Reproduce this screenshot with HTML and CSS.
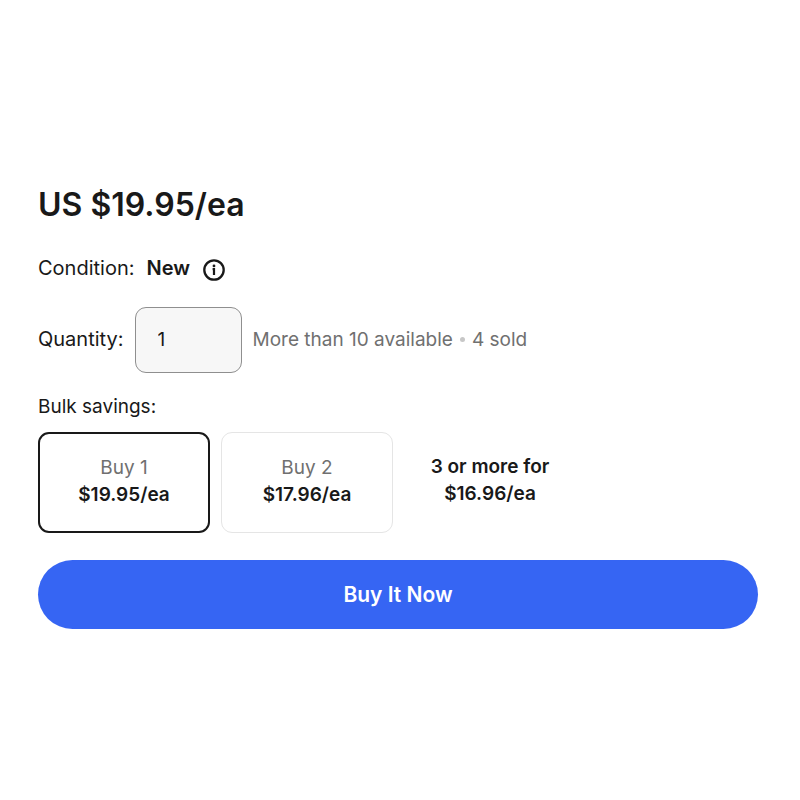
FILE: index.html
```html
<!DOCTYPE html>
<html lang="en">
<head>
  <meta charset="UTF-8">
  <meta name="viewport" content="width=device-width, initial-scale=1.0">
  <title>Buy It Now</title>
  <link rel="stylesheet" href="styles.css">
</head>
<body>

<form class="buy-box">
  <h1 class="price">US $19.95/ea</h1>

  <div class="condition">
    <span>Condition:</span>
    <strong>New</strong>
    <button type="button" class="info-button" aria-label="About this condition">
      <svg viewBox="0 0 24 24" width="24" height="24" fill="none" stroke="#191919">
        <circle cx="12" cy="12" r="9.7" stroke-width="2.3"/>
        <path d="M10.6 11.2H12V17" stroke-width="2.2"/>
        <circle cx="12" cy="7.9" r="1.4" fill="#191919" stroke="none"/>
      </svg>
    </button>
  </div>

  <div class="quantity">
    <label for="quantity">Quantity:</label>
    <input type="text" id="quantity" name="quantity" value="1" inputmode="numeric">
    <p class="stock">More than 10 available <span class="dot"></span> 4 sold</p>
  </div>

  <p class="bulk-title">Bulk savings:</p>
  <div class="bulk-options">
    <button type="button" class="bulk-option selected" aria-pressed="true">
      <span class="bulk-label">Buy 1</span>
      <strong>$19.95/ea</strong>
    </button>
    <button type="button" class="bulk-option" aria-pressed="false">
      <span class="bulk-label">Buy 2</span>
      <strong>$17.96/ea</strong>
    </button>
    <p class="bulk-more">3 or more for<br>$16.96/ea</p>
  </div>

  <button type="submit" class="buy-button">Buy It Now</button>
</form>

</body>
</html>
```

FILE: styles.css
```css
* {
  box-sizing: border-box;
}

body {
  margin: 0;
  background-color: white;
  color: #191919;
  font-family: Inter, Arial, sans-serif;
  font-size: 19px;
  line-height: 27px;
}

button, input {
  font: inherit;
  color: inherit;
}

p {
  margin: 0;
}

strong {
  font-weight: 600;
}

.buy-box {
  padding: 184px 42px 0 38px;
}

.price {
  margin: 0 0 29px;
  font-size: 32px;
  line-height: 42px;
  font-weight: 600;
}

.condition {
  display: flex;
  align-items: flex-end;
  gap: 12px;
  margin-bottom: 25px;
  font-size: 20px;
}

.info-button {
  width: 24px;
  height: 24px;
  padding: 0;
  border: none;
  background: none;
  cursor: pointer;
}

.info-button svg {
  display: block;
}

.quantity {
  display: flex;
  align-items: center;
  gap: 11px;
  margin-bottom: 20px;
}

.quantity label {
  padding-bottom: 2px;
  font-size: 20px;
}

.quantity input {
  width: 107px;
  height: 66px;
  padding: 0 22px 2px;
  border: 1px solid #8f8f8f;
  border-radius: 11px;
  background-color: #f7f7f7;
}

.stock {
  display: flex;
  align-items: center;
  gap: 7px;
  padding-bottom: 2px;
  color: #707070;
}

.dot {
  width: 5px;
  height: 5px;
  border-radius: 50%;
  background-color: #c7c7c7;
}

.bulk-title {
  margin-bottom: 12px;
}

.bulk-options {
  display: flex;
  gap: 11px;
  margin-bottom: 27px;
}

.bulk-option, .bulk-more {
  width: 172px;
  height: 101px;
  text-align: center;
}

.bulk-option {
  padding: 0 0 4px;
  border: 1px solid #e5e5e5;
  border-radius: 11px;
  background-color: white;
  cursor: pointer;
}

.bulk-option.selected {
  border: 2px solid #191919;
}

.bulk-label {
  display: block;
  color: #707070;
}

.bulk-more {
  padding-top: 21px;
  font-weight: 600;
}

.buy-button {
  width: 100%;
  height: 69px;
  border: none;
  border-radius: 35px;
  background-color: #3665f3;
  color: white;
  font-size: 21px;
  font-weight: 600;
  cursor: pointer;
}
```
